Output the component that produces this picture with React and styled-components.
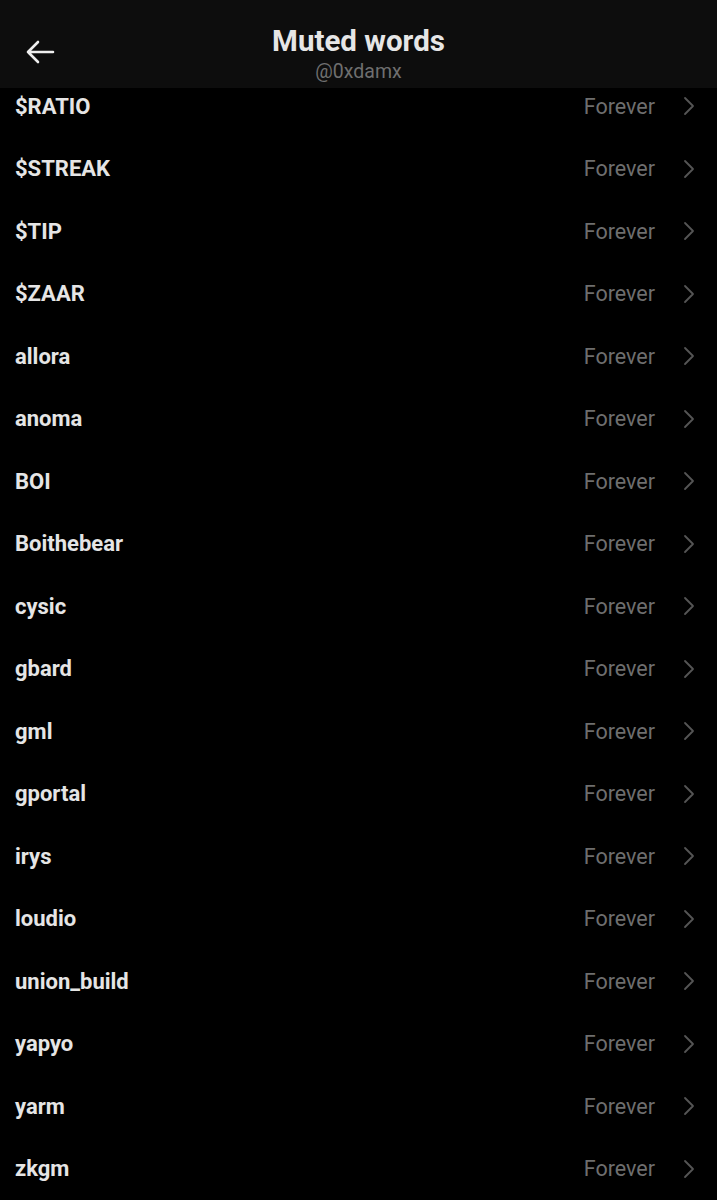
import React from 'react';
import styled, { createGlobalStyle } from 'styled-components';

const GlobalStyle = createGlobalStyle`
  html, body {
    margin: 0;
    padding: 0;
    background: #000;
  }
  body {
    font-family: Roboto, "Liberation Sans", Arial, sans-serif;
    -webkit-font-smoothing: antialiased;
  }
`;

const Page = styled.div`
  position: relative;
  width: 717px;
  min-height: 1200px;
  background: #000;
  overflow: hidden;
`;

const Header = styled.header`
  position: absolute;
  top: 0;
  left: 0;
  right: 0;
  height: 88px;
  background: #0d0d0d;
  display: grid;
  grid-template-columns: 80px 1fr 80px;
  align-items: start;
  z-index: 2;
`;

const BackButton = styled.button`
  background: none;
  border: none;
  padding: 0 0 0 25px;
  margin-top: 40px;
  display: flex;
  align-items: center;
  cursor: pointer;
`;

const TitleBlock = styled.div`
  display: flex;
  flex-direction: column;
  align-items: center;
  padding-top: 24px;
`;

const Title = styled.h1`
  margin: 0;
  font-size: 29.5px;
  font-weight: 700;
  color: #e6e6e6;
  line-height: 34px;
`;

const Handle = styled.div`
  font-size: 19.5px;
  color: #6f6f6f;
  line-height: 24px;
  margin-top: 2px;
`;

const List = styled.ul`
  list-style: none;
  margin: 0;
  padding: 75px 0 0;
`;

const Row = styled.li`
  height: 62.5px;
  display: flex;
  align-items: center;
  padding: 0 22px 0 15px;
`;

const Word = styled.span`
  flex: 1;
  font-size: 22px;
  font-weight: 700;
  color: #e5e5e5;
`;

const Duration = styled.span`
  font-size: 21.5px;
  color: #6e6e6e;
  margin-right: 28px;
`;

const Chevron = () => (
  <svg width="12" height="20" viewBox="0 0 12 20">
    <polyline points="2,2 10,10 2,18" fill="none" stroke="#555" strokeWidth="1.8" strokeLinecap="round" strokeLinejoin="round" />
  </svg>
);

const BackArrow = () => (
  <svg width="30" height="24" viewBox="0 0 30 24">
    <path d="M28 12H3M13 2L3 12l10 10" fill="none" stroke="#eee" strokeWidth="2.6" strokeLinecap="round" strokeLinejoin="round" />
  </svg>
);

const words = [
  '$RATIO', '$STREAK', '$TIP', '$ZAAR', 'allora', 'anoma', 'BOI', 'Boithebear',
  'cysic', 'gbard', 'gml', 'gportal', 'irys', 'loudio', 'union_build', 'yapyo',
  'yarm', 'zkgm',
];

export default function App() {
  return (
    <Page>
      <GlobalStyle />
      <Header>
        <BackButton aria-label="Back">
          <BackArrow />
        </BackButton>
        <TitleBlock>
          <Title>Muted words</Title>
          <Handle>@0xdamx</Handle>
        </TitleBlock>
        <div />
      </Header>
      <List>
        {words.map(w => (
          <Row key={w}>
            <Word>{w}</Word>
            <Duration>Forever</Duration>
            <Chevron />
          </Row>
        ))}
      </List>
    </Page>
  );
}
